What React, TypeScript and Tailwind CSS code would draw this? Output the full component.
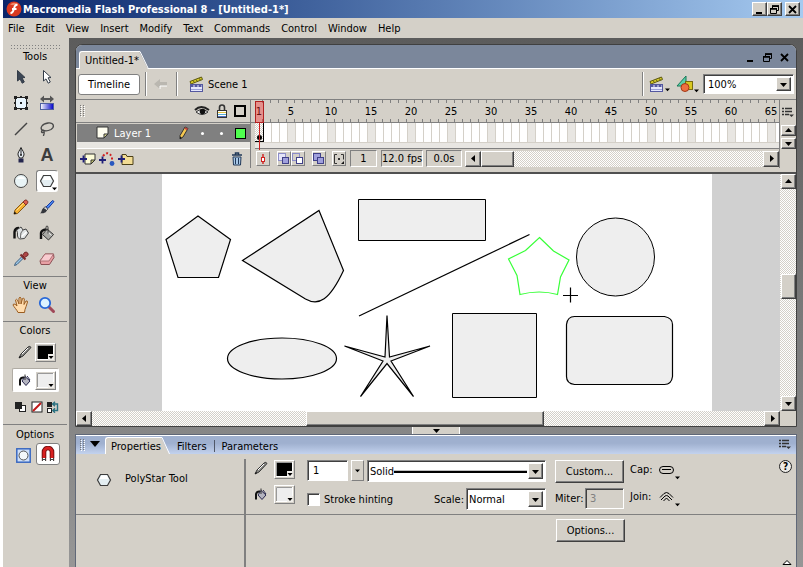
import React, { useState } from "react";

type Kids = { children?: React.ReactNode };

const TRACK =
  "bg-[repeating-conic-gradient(#ffffff_0_25%,#d4d0c8_0_50%)] [background-size:2px_2px]";
const RAISED =
  "border border-t-white border-l-white border-r-[#404040] border-b-[#404040] bg-[#d4d0c8] shadow-[inset_-1px_-1px_0_#808080]";
const SUNKEN =
  "border border-t-[#808080] border-l-[#808080] border-r-white border-b-white";
const WELL =
  "border border-t-[#808080] border-l-[#808080] border-r-white border-b-white shadow-[inset_1px_1px_0_#404040] bg-white";

function Ico({ s = 16, children }: Kids & { s?: number }) {
  return (
    <svg width={s} height={s} viewBox={`0 0 ${s} ${s}`} className="block shrink-0" aria-hidden="true">
      {children}
    </svg>
  );
}

function Tri({ dir, small = false }: { dir: "up" | "down" | "left" | "right"; small?: boolean }) {
  const d = {
    down: "M0 2h7L3.500 6z",
    up: "M0 5h7L3.500 1z",
    left: "M5 0v7L1 3.500z",
    right: "M2 0v7L6 3.500z",
  }[dir];
  return (
    <svg width={small ? 5 : 7} height={small ? 5 : 7} viewBox="0 0 7 7" className="block shrink-0" aria-hidden="true">
      <path d={d} fill="#000" />
    </svg>
  );
}

/* ---------- tool icons ---------- */

const ArrowIcon = ({ fill }: { fill: string }) => (
  <Ico>
    <path d="M4.500 1.500l7.500 7-3 .3 2.300 4.200-2.100 1.200-2.200-4.300L4.500 12z" fill={fill} stroke="#333c48" strokeWidth="1" />
  </Ico>
);
const TransformIcon = () => (
  <Ico>
    <rect x="2.5" y="2.500" width="11" height="11" fill="#e8f4fc" stroke="#222" />
    <path d="M1 1h3v3H1zM12 1h3v3h-3zM1 12h3v3H1zM12 12h3v3h-3zM7 1h2v2H7zM7 13h2v2H7zM1 7h2v2H1zM13 7h2v2h-2zM7 7h2v2H7z" fill="#222" />
  </Ico>
);
const GradientIcon = () => (
  <Ico>
    <defs>
      <linearGradient id="gt">
        <stop offset="0" stopColor="#fff" />
        <stop offset="1" stopColor="#0000c8" />
      </linearGradient>
    </defs>
    <path d="M1 4L5 .5V3h6V.5L15 4l-4 3.500V5H5v2.500z" fill="#555" />
    <rect x="1.500" y="8.500" width="13" height="6" fill="url(#gt)" stroke="#5060a0" />
  </Ico>
);
const LineIcon = () => (
  <Ico>
    <path d="M2 14L14 2" stroke="#444" strokeWidth="1.400" />
  </Ico>
);
const LassoIcon = () => (
  <Ico>
    <path d="M4 10C0 7 3 3 9 2c6-.6 7 4 3 6.500-3 1.500-6 1.800-8 .5-2 .5-2 3 0 2.500 2-.6 1-2.500-.5-2M5 11c1 1-.5 2-.500 4" fill="none" stroke="#4a4a4a" strokeWidth="1.300" />
  </Ico>
);
const PenIcon = () => (
  <Ico>
    <path d="M8 .5C7 3 4.500 5.500 5 8l1.500 3h3L11 8c.5-2.500-2-5-3-7.500z" fill="#e8eef6" stroke="#222" />
    <path d="M8 2v6" stroke="#222" />
    <circle cx="8" cy="8" r="1" fill="#222" />
    <path d="M5.500 11.500h5v4h-5z" fill="#24264e" />
  </Ico>
);
const OvalIcon = () => (
  <Ico>
    <circle cx="8" cy="8" r="6.500" fill="#e9f4f6" stroke="#444" />
    <path d="M4 6c2-3.500 6-3.500 8 0z" fill="#fff" />
  </Ico>
);
const PolyIcon = () => (
  <Ico>
    <path d="M4.500 2.500h7l3 5.500-3 5.500h-7L1.500 8z" fill="#e4eef2" stroke="#3c3c3c" strokeWidth="1.200" />
    <path d="M5.500 3.500h5.500L12.500 7h-9z" fill="#fff" />
  </Ico>
);
const PencilIcon = () => (
  <Ico>
    <path d="M2 11L10 3l3 3-8.500 8.500L1 15z" fill="#f5b030" stroke="#8a5a18" />
    <path d="M3.500 11.500L11 4" stroke="#ffe08a" />
    <path d="M10 3L12 1.200q1-.7 2.200.5t.5 2.200L13 6z" fill="#e06050" stroke="#803028" />
    <path d="M.8 15.200l.8-2.700 1.900 1.900z" fill="#111" />
  </Ico>
);
const BrushIcon = () => (
  <Ico>
    <path d="M7 8L13.500 1.500l1.500 1L9 9.500z" fill="#4a88f0" stroke="#1838a0" />
    <path d="M6 7.500L9 10l-1.500 1.500-3-2z" fill="#cfd4dc" stroke="#444" strokeWidth=".8" />
    <path d="M4.500 9L8 11.500C6 15 3 14 1 14.500 3 13 2.500 10 4.500 9z" fill="#34363c" />
  </Ico>
);
const InkIcon = () => (
  <Ico>
    <path d="M1.500 13.500V7Q2 3 6 3" fill="none" stroke="#111" strokeWidth="2.400" />
    <path d="M4.500 11q.5-4-1-6L8 2l2 3 3-1 2.500 4-4 5.500-5 .5q-1.500-1-2-3z" fill="#dfe3e4" stroke="#444" />
    <path d="M10 5Q7 7 7.500 13" fill="none" stroke="#666" />
    <path d="M8.500 11.500L13.500 7" fill="none" stroke="#fff" strokeWidth="1.500" />
  </Ico>
);
const BucketIcon = () => (
  <Ico>
    <path d="M2 14V8Q2.500 5 7 4.500" fill="none" stroke="#111" strokeWidth="2.400" />
    <path d="M8 4l6.500 5.500-5 5.500L3.500 9.500z" fill="#a8a8a4" stroke="#333" />
    <path d="M7.500 6l5 4.500" stroke="#eee" />
    <path d="M9 8.500V2.500Q9 1 8 1T7 2.500V6" fill="none" stroke="#333" />
  </Ico>
);
const DropperIcon = () => (
  <Ico>
    <path d="M9 5.500L2.500 12l-1 2.500L4 13.500 10.500 7z" fill="#9cc8e8" stroke="#406080" />
    <path d="M7.500 3.500l5 5" stroke="#803030" strokeWidth="2.200" />
    <path d="M9.500 4.500l2-3q1.800-1 3 .3t.3 2.700L11.500 6.500z" fill="#b04848" stroke="#702828" />
  </Ico>
);
const EraserIcon = () => (
  <Ico>
    <path d="M6 3h8.500l.5 3.500-4.500 7H2L1 10z" fill="#e8a0a4" stroke="#8c5054" />
    <path d="M6 3h8.500L10 10H1z" fill="#f8ccd0" stroke="#a06468" strokeWidth=".8" />
  </Ico>
);
const HandIcon = () => (
  <Ico s={18}>
    <path d="M6 16.500C5 14 2 11 1 9q.2-1.500 2-.8L5 10 3.500 4q1-1.400 2 0L7 8V2q1-1.500 2 0v6l1.500-5.500q1.300-1 1.800.5L12 8.500l2-3.500q1.500-.6 1.500 1-1.500 5-2.500 7.500l-.5 3z" fill="#ffdcae" stroke="#9a5c20" />
  </Ico>
);
const MagnifyIcon = () => (
  <Ico s={18}>
    <path d="M11 11l4.500 4.500" stroke="#a04858" strokeWidth="3" strokeLinecap="round" />
    <circle cx="7" cy="7" r="5.200" fill="#dcf2ff" stroke="#2868d8" strokeWidth="1.800" />
  </Ico>
);
const StrokePen = () => (
  <Ico s={14}>
    <path d="M1 13l2-4L10 2q2-1.500 3 .5L5 11z" fill="#8c8c88" stroke="#333" />
    <path d="M4 9l6-6" stroke="#fff" />
    <path d="M1 13l1-2 1 1z" fill="#000" />
  </Ico>
);
const SmallBucket = () => (
  <Ico s={14}>
    <path d="M2 12.500V7Q3 4 6 4.500" fill="none" stroke="#111" strokeWidth="2" />
    <path d="M7 3.500L12 8l-4 4.500L4 8z" fill="#b4b4c0" stroke="#26264c" />
    <path d="M7 7V1.500" stroke="#333" />
    <path d="M9 3l3 4" stroke="#26264c" />
  </Ico>
);

const Clapper = () => (
  <Ico>
    <path d="M1 5.500L12.500 1l1 2.500L2 8z" fill="#d8cc28" stroke="#5c5810" />
    <path d="M4 4.500l1.500 2M7 3.500l1.500 2M10 2.200l1.500 2" stroke="#5c5810" />
    <rect x="1.500" y="8.500" width="12" height="7" fill="#e4e6fc" stroke="#5458a0" />
    <path d="M1.500 10h12" stroke="#5458a0" strokeWidth="2" strokeDasharray="3 1" />
    <path d="M2 13.500h11" stroke="#9ca0d8" />
  </Ico>
);
const SymbolsIcon = () => (
  <Ico s={18}>
    <path d="M1 11L10 1v10z" fill="#5cd0a8" stroke="#187858" />
    <rect x="9.500" y="6.500" width="7" height="8" fill="#d8c820" stroke="#786c10" />
    <circle cx="9" cy="12.500" r="4" fill="#f07040" stroke="#a03818" />
  </Ico>
);
const RestoreIcon = () => (
  <Ico s={9}>
    <path d="M2.500 3.500V1.500h6v4H6.500M2 1h7M.5 8.500v-5h6v5zM0 3.500h7" fill="none" stroke="#000" />
    <path d="M2 1h7M0 4h7" stroke="#000" strokeWidth="1.500" />
  </Ico>
);
const CrossIcon = () => (
  <Ico s={9}>
    <path d="M1 1l7 7M8 1L1 8" stroke="#000" strokeWidth="1.800" />
  </Ico>
);
const MinIcon = () => (
  <Ico s={9}>
    <path d="M1 8h6" stroke="#000" strokeWidth="2" />
  </Ico>
);
const MenuIcon = () => (
  <Ico s={12}>
    <path d="M0 1.500h2M3 1.500h7M0 4.500h2M3 4.500h7M0 7.500h2M3 7.500h4" stroke="#333" strokeWidth="1.300" />
    <path d="M7 7.500h5L9.500 10z" fill="#333" />
  </Ico>
);

const FONT = "font-['DejaVu_Sans_Condensed','DejaVu_Sans',Tahoma,sans-serif]";

function WinBtn({ label, children }: Kids & { label: string }) {
  return (
    <button aria-label={label} className={`flex h-[14px] w-[15px] items-center justify-center ${RAISED}`}>
      {children}
    </button>
  );
}

function ScrollBtn({ dir, className }: { dir: "up" | "down" | "left" | "right"; className: string }) {
  return (
    <button aria-label={`Scroll ${dir}`} className={`flex shrink-0 items-center justify-center ${RAISED} ${className}`}>
      <Tri dir={dir} />
    </button>
  );
}

function Swatch({ label, color }: { label: string; color: string }) {
  return (
    <button aria-label={label} className="flex h-[19px] w-[21px] items-center justify-center border border-t-white border-l-white border-r-[#808080] border-b-[#808080] bg-[#d4d0c8]">
      <svg width="17" height="15" viewBox="0 0 17 15" aria-hidden="true">
        <rect x=".5" y=".5" width="16" height="14" fill={color} stroke="#fff" />
        <path d="M.5 14V.5H16" fill="none" stroke="#999" />
        <path d="M11 9h6v6h-6z" fill="#f0eeea" />
        <path d="M11.500 11h5L14 14z" fill="#000" />
      </svg>
    </button>
  );
}

function Grip() {
  return (
    <svg width="6" height="12" aria-hidden="true" className="block shrink-0">
      {[0, 2, 4, 6, 8, 10].map((y) => (
        <g key={y}>
          <path d={`M0 ${y}h1v1H0zM3 ${y}h1v1H3z`} fill="#777" />
          <path d={`M1 ${y + 1}h1v1H1zM4 ${y + 1}h1v1H4z`} fill="#fff" />
        </g>
      ))}
    </svg>
  );
}

const tools: [string, React.ReactNode][] = [
  ["Selection", <ArrowIcon fill="#3c4654" />],
  ["Subselection", <ArrowIcon fill="#fff" />],
  ["Free transform", <TransformIcon />],
  ["Gradient transform", <GradientIcon />],
  ["Line", <LineIcon />],
  ["Lasso", <LassoIcon />],
  ["Pen", <PenIcon />],
  ["Text", <span className="font-['Liberation_Sans',sans-serif] text-[18px] leading-[18px] font-bold text-[#3c3c3c]">A</span>],
  ["Oval", <OvalIcon />],
  ["PolyStar", <PolyIcon />],
  ["Pencil", <PencilIcon />],
  ["Brush", <BrushIcon />],
  ["Ink bottle", <InkIcon />],
  ["Paint bucket", <BucketIcon />],
  ["Eyedropper", <DropperIcon />],
  ["Eraser", <EraserIcon />],
];

function Heading({ children }: Kids) {
  return <h2 className="text-center">{children}</h2>;
}

function ToolPanel() {
  return (
    <aside className="flex w-[66px] shrink-0 flex-col bg-[#d4d0c8]">
      <div className="mx-[7px] mt-[6px] h-[5px] bg-[radial-gradient(#808080_1px,transparent_1px)] [background-size:3px_3px]" />
      <div className="pr-[2px] pt-px pb-px">
        <Heading>Tools</Heading>
      </div>
      <div className="grid grid-cols-2 pr-[9px] pl-[5px]">
        {tools.map(([name, icon]) => (
          <button
            key={name}
            aria-label={name}
            className={
              name === "PolyStar"
                ? "mx-[2px] my-[2px] flex h-[22px] items-center rounded-[3px] border border-[#808080] border-r-white border-b-white bg-white pl-[2px]"
                : "flex h-[26px] items-center justify-center"
            }
          >
            {icon}
            {name === "PolyStar" && (
              <span className="-ml-[3px] mt-[14px]">
                <Tri dir="down" small />
              </span>
            )}
          </button>
        ))}
      </div>
      <div className="mr-[2px] mt-[4px] border-t border-[#808080] pt-[2px]">
        <Heading>View</Heading>
      </div>
      <div className="grid grid-cols-2 pr-[9px] pl-[5px]">
        <button aria-label="Hand" className="flex h-[26px] items-center justify-center"><HandIcon /></button>
        <button aria-label="Zoom" className="flex h-[26px] items-center justify-center"><MagnifyIcon /></button>
      </div>
      <div className="mr-[2px] mt-[3px] border-t border-[#808080] pt-[2px]">
        <Heading>Colors</Heading>
      </div>
      <div className="mt-[3px] ml-[9px] flex h-[24px] w-[47px] items-center gap-[3px] pl-[6px]">
        <StrokePen />
        <Swatch label="Stroke color" color="#000" />
      </div>
      <div className="mt-[4px] ml-[9px] flex h-[24px] w-[47px] items-center gap-[3px] rounded-[2px] border border-[#b0aca4] border-r-white border-b-white bg-white pl-[5px]">
        <SmallBucket />
        <Swatch label="Fill color" color="#eee" />
      </div>
      <div className="mt-[9px] ml-[12px] flex items-center gap-[4px]">
        <button aria-label="Black and white">
          <Ico s={12}>
            <rect x="4.500" y="4.500" width="6" height="6" fill="#fff" stroke="#222" />
            <rect x="0" y="1" width="7" height="7" fill="#222" />
          </Ico>
        </button>
        <button aria-label="No color">
          <Ico s={12}>
            <rect x="1" y="1" width="10" height="10" fill="#fff" stroke="#222" />
            <path d="M2 10L10 2" stroke="#c01818" strokeWidth="2" />
          </Ico>
        </button>
        <button aria-label="Swap colors">
          <Ico s={12}>
            <rect x="0" y="1" width="5" height="5" fill="#222" />
            <rect x=".5" y="7.500" width="4" height="4" fill="#fff" stroke="#222" />
            <path d="M5 3h5.500v6.500H6M8 .8L5.800 3 8 5.200M8 7.300L5.800 9.500 8 11.700" fill="none" stroke="#287080" strokeWidth="1.400" />
          </Ico>
        </button>
      </div>
      <div className="mr-[2px] mt-[11px] border-t border-[#808080] pt-[3px]">
        <Heading>Options</Heading>
      </div>
      <div className="mt-[2px] grid grid-cols-2 pr-[7px] pl-[7px]">
        <button aria-label="Object drawing" className="flex h-[24px] items-center justify-center">
          <Ico s={15}>
            <rect x=".8" y=".8" width="13.400" height="13.400" fill="#cfe0fa" stroke="#3a68c0" strokeWidth="1.500" />
            <circle cx="7.500" cy="7.500" r="4.500" fill="#f4f8fa" stroke="#555" />
          </Ico>
        </button>
        <button aria-label="Snap to objects" className="flex h-[22px] w-[24px] items-center justify-center rounded-[3px] border border-[#808080] bg-white">
          <Ico>
            <path d="M4 15V6a4 4 0 018 0v9" fill="none" stroke="#701010" strokeWidth="4.600" />
            <path d="M4 12V6a4 4 0 018 0v6" fill="none" stroke="#d82020" strokeWidth="2.800" />
            <path d="M1.500 12h5v4h-5zM9.500 12h5v4h-5z" fill="#fff" />
            <path d="M2 12h1v3H2zM5 12h1v3H5zM3 13h2v1H3zM10 12h1v3h-1zM13 12h1v3h-1zM11 13h2v1h-2z" fill="#444" />
          </Ico>
        </button>
      </div>
    </aside>
  );
}

const Sep = () => <span className="h-[24px] w-[2px] border-l border-r border-l-[#808080] border-r-white" />;

function DocBar() {
  return (
    <>
      <div className="flex h-[24px] items-end border-b border-white bg-[#7b879b] pl-[3px]">
        <button role="tab" aria-selected="true" className="-mb-px h-[18px] rounded-tl-[3px] border-t border-l border-white bg-[#d4d0c8] pl-[5px]">
          Untitled-1*
        </button>
        <svg width="10" height="18" className="-mb-px block" aria-hidden="true">
          <path d="M0 0L9 18H0z" fill="#d4d0c8" />
          <path d="M0 .5H1L9.500 18" fill="none" stroke="#fff" />
        </svg>
        <div className="mb-[6px] ml-auto flex gap-[8px] pr-[7px]">
          <button aria-label="Minimize document"><MinIcon /></button>
          <button aria-label="Restore document"><RestoreIcon /></button>
          <button aria-label="Close document"><CrossIcon /></button>
        </div>
      </div>
      <div className="flex h-[30px] items-center bg-[#d4d0c8] pl-[2px] pr-[2px]">
        <button className="mr-[5px] h-[21px] w-[62px] rounded-[3px] border border-[#808080] bg-white text-center">Timeline</button>
        <Sep />
        <button aria-label="Back" className="mr-[7px] ml-[6px]" disabled>
          <Ico>
            <path d="M1 8l6-5v3h7v4H7v3z" fill="#bab7b0" />
            <path d="M7 13v-3h7" stroke="#fff" fill="none" />
          </Ico>
        </button>
        <Sep />
        <span className="ml-[11px] flex items-center gap-[3px]">
          <Clapper />
          Scene 1
        </span>
        <span className="ml-auto" />
        <Sep />
        <button aria-label="Edit scene" className="ml-[5px] flex items-end">
          <Clapper />
          <Tri dir="down" small />
        </button>
        <button aria-label="Edit symbols" className="mr-[4px] ml-[6px] flex items-end">
          <SymbolsIcon />
          <Tri dir="down" small />
        </button>
        <span className={`flex h-[20px] w-[91px] items-stretch p-[2px] ${WELL}`}>
          <select aria-label="Zoom level" className="min-w-0 flex-1 appearance-none bg-transparent pl-[2px] outline-none">
            <option>100%</option>
          </select>
          <span className={`pointer-events-none flex w-[15px] items-center justify-center ${RAISED}`}>
            <Tri dir="down" />
          </span>
        </span>
      </div>
    </>
  );
}

const frames = Array.from({ length: 66 }, (_, i) => i + 1);

function FrameBtn({ label, children }: Kids & { label: string }) {
  return (
    <button aria-label={label} className="flex h-[15px] w-[14px] items-center justify-center border border-t-white border-l-white border-r-[#808080] border-b-[#808080]">
      {children}
    </button>
  );
}

function Timeline() {
  return (
    <section aria-label="Timeline" className="flex border-t border-[#808080] bg-[#d4d0c8] pb-[4px]">
      <div className="flex w-[174px] shrink-0 flex-col">
        <div className="flex h-[23px] items-center border-b border-[#808080] pl-[4px] pr-[4px]">
          <Grip />
          <span className="ml-auto flex items-center gap-[6px]">
            <svg width="16" height="12" viewBox="0 0 16 12" aria-label="Show">
              <path d="M1 5Q7-1 15 5" fill="none" stroke="#222" strokeWidth="2" />
              <path d="M2 7q6-5 12 0-6 5-12 0z" fill="#eee" stroke="#333" />
              <circle cx="8.500" cy="6.500" r="2.800" fill="#111" />
            </svg>
            <svg width="12" height="14" viewBox="0 0 12 14" aria-label="Lock">
              <path d="M3.500 7V3.500q0-2.500 2.500-2.500t2.500 2.500V7" fill="none" stroke="#333" strokeWidth="1.600" />
              <rect x="1.500" y="6.500" width="9" height="7" fill="#fff" stroke="#333" />
              <path d="M2 8.500h8" stroke="#e0c040" />
              <path d="M2 10.500h8" stroke="#58b0d8" />
              <path d="M2 12.500h8" stroke="#5070c0" />
            </svg>
            <Ico s={12}>
              <rect x="1" y="1" width="10" height="10" fill="none" stroke="#000" strokeWidth="2" />
            </Ico>
          </span>
        </div>
        <div className="mt-[1px] ml-px flex h-[18px] items-center bg-[#808080] pl-[19px] pr-[4px] text-white">
          <Ico s={14}>
            <path d="M1 1h11v7l-4 4H1z" fill="#fffef0" stroke="#333" />
            <path d="M12 8H8v4z" fill="#d8d890" stroke="#333" />
          </Ico>
          <span className="ml-[4px]">Layer 1</span>
          <span className="ml-auto flex items-center">
            <svg width="10" height="14" viewBox="0 0 10 14" aria-hidden="true">
              <path d="M1 13V9.500L6 1l3 1.500-5 8.500z" fill="#f5c850" stroke="#333" />
              <path d="M5.800 2l2.700 1.500" stroke="#c04040" strokeWidth="2" />
              <path d="M1 13v-2.500L3 12z" fill="#111" />
            </svg>
            <span className="ml-[12px] h-[3px] w-[3px] rounded-full bg-white" />
            <span className="ml-[16px] h-[3px] w-[3px] rounded-full bg-white" />
            <span className="ml-[12px] h-[11px] w-[11px] border border-black bg-[#4fff4f]" />
          </span>
        </div>
        <div className="ml-px h-[7px] border-b border-white bg-[#e8e6e2]" />
        <div className="flex h-[19px] items-center gap-[3px] pl-[4px] pr-[6px]">
          <button aria-label="Insert layer">
            <Ico>
              <path d="M5 3h10v6l-4 4H5z" fill="#fdfcd8" stroke="#333" />
              <path d="M15 9h-4v4z" fill="#c8c870" stroke="#333" />
              <path d="M0 8h7M3.500 4.500v7" stroke="#202078" strokeWidth="1.800" />
            </Ico>
          </button>
          <button aria-label="Add motion guide">
            <Ico>
              <path d="M4 5Q9-1 13 6v5" fill="none" stroke="#d02020" strokeWidth="2" strokeDasharray="2 2" />
              <circle cx="13" cy="12.500" r="2.400" fill="#2858c0" />
              <path d="M0 9h7M3.500 5.500v7" stroke="#202078" strokeWidth="1.800" />
            </Ico>
          </button>
          <button aria-label="Insert folder">
            <Ico>
              <path d="M4 13.500V3.500h4l1 2h6v8z" fill="#f2dc94" stroke="#4c4018" />
              <path d="M0 8h7M3.500 4.500v7" stroke="#202078" strokeWidth="1.800" />
            </Ico>
          </button>
          <button aria-label="Delete layer" className="ml-auto">
            <Ico s={14}>
              <path d="M2 3h10M5.500 2.500V1h3v1.500" stroke="#203858" strokeWidth="1.500" fill="none" />
              <path d="M3 5h8l-.5 8h-7z" fill="#a8c8e8" stroke="#203858" />
              <path d="M5.500 6v6M8.500 6v6" stroke="#203858" />
            </Ico>
          </button>
        </div>
      </div>

      <div className="relative flex min-w-0 flex-1 flex-col border-l border-[#808080]">
        <div className="flex h-[23px] overflow-hidden border-b border-[#808080] pl-[4px]">
          {frames.map((n) => (
            <span key={n} className="flex h-[22px] w-[8px] shrink-0 flex-col justify-between">
              <span className="ml-[7px] h-[3px] w-px bg-[#808080]" />
              <span className="flex h-[13px] w-[8px] justify-center whitespace-nowrap">{n === 1 || n % 5 === 0 ? n : ""}</span>
              <span className="ml-[7px] h-[3px] w-px bg-[#808080]" />
            </span>
          ))}
        </div>
        <div className="flex h-[20px] overflow-hidden border-b border-[#d4d0c8] pl-[4px]">
          {frames.map((n) => (
            <span
              key={n}
              className={
                n === 1
                  ? `flex w-[9px] shrink-0 items-end justify-center border-r border-b border-black pb-[1px] ${TRACK}`
                  : n % 5 === 0
                    ? "w-[8px] shrink-0 border-r border-[#d4d0c8] bg-[#e8e6e2]"
                    : "w-[8px] shrink-0 border-r border-[#d4d0c8] bg-white"
              }
            >
              {n === 1 && <span className="h-[5px] w-[5px] shrink-0 rounded-full bg-black" />}
            </span>
          ))}
        </div>
        <div className="ml-[4px] h-[6px] border-b border-[#808080] bg-[#e8e6e2]" />
        <div className="flex h-[19px] items-center pl-[5px]">
          <FrameBtn label="Center frame">
            <Ico s={10}><path d="M5 0v10" stroke="#d02020" strokeWidth="1.400" /><rect x="3.500" y="3.500" width="3" height="4" fill="#fff" stroke="#d02020" /></Ico>
          </FrameBtn>
          <span className="ml-[7px] flex">
            <FrameBtn label="Onion skin">
              <Ico s={12}><rect x=".5" y=".5" width="7" height="7" fill="#e4e4f8" stroke="#8c8cc8" /><rect x="4.500" y="4.500" width="6" height="6" fill="#a0a0dc" stroke="#404088" /></Ico>
            </FrameBtn>
            <FrameBtn label="Onion skin outlines">
              <Ico s={12}><rect x=".5" y=".5" width="7" height="7" fill="none" stroke="#8c8cc8" /><rect x="4.500" y="4.500" width="6" height="6" fill="#fff" stroke="#404088" /></Ico>
            </FrameBtn>
          </span>
          <span className="ml-[7px] flex">
            <FrameBtn label="Edit multiple frames">
              <Ico s={12}><rect x=".5" y=".5" width="7" height="7" fill="#a0a0dc" stroke="#404088" /><rect x="4.500" y="4.500" width="6" height="6" fill="#a0a0dc" stroke="#404088" /></Ico>
            </FrameBtn>
          </span>
          <span className="ml-[6px] flex">
            <FrameBtn label="Modify onion markers">
              <Ico s={12}><path d="M4 1.500H1.500v9H4M8 1.500h2.500v5" fill="none" stroke="#333" /><path d="M5 6h2" stroke="#333" strokeWidth="2" /><path d="M11 8v3H8z" fill="#111" /></Ico>
            </FrameBtn>
          </span>
          <span className={`ml-[4px] h-[17px] w-[27px] text-center leading-[16px] ${SUNKEN}`}>1</span>
          <span className={`ml-[4px] h-[17px] w-[42px] text-center leading-[16px] whitespace-nowrap ${SUNKEN}`}>12.0 fps</span>
          <span className={`ml-[3px] h-[17px] w-[36px] text-center leading-[16px] ${SUNKEN}`}>0.0s</span>
          <div className={`ml-[3px] flex h-[16px] flex-1 ${TRACK}`}>
            <ScrollBtn dir="left" className="h-[16px] w-[16px]" />
            <span className={`h-[16px] w-[33px] ${RAISED}`} />
            <span className="ml-auto" />
            <ScrollBtn dir="right" className="h-[16px] w-[16px]" />
          </div>
        </div>
        <div className="pointer-events-none absolute top-[1px] left-[4px] flex w-[9px] flex-col items-center">
          <span className="h-[22px] w-full border border-[#b02020] bg-[#ff3030]/40" />
          <span className="h-[27px] w-px bg-[#d02020]" />
        </div>
      </div>

      <div className="flex w-[17px] shrink-0 flex-col items-center border-l border-[#808080]">
        <button aria-label="Frame view" className="flex h-[25px] items-center">
          <MenuIcon />
        </button>
        <ScrollBtn dir="up" className="h-[11px] w-[15px]" />
        <ScrollBtn dir="down" className="mt-[2px] h-[11px] w-[15px]" />
      </div>
    </section>
  );
}

function Stage() {
  return (
    <div className="flex h-[239px] border-t-2 border-[#505050] bg-[#d0d0d0]">
      <div className="mr-[68px] ml-[86px] min-w-0 flex-1 overflow-hidden bg-white">
        <svg width="550" height="237" viewBox="162 174 550 237" className="block" fill="#eee" stroke="#000" strokeWidth="1.200" aria-label="Stage drawing">
          <path d="M198 216l32.500 23.500-12 38h-40.500l-12-38z" />
          <path d="M319 210.500l24.500 60c-14 30-25 36-38 28.500L242.500 260.500z" />
          <path d="M358.500 199.500h127v41h-127zM452.500 313.500h84v84h-84z" strokeWidth="1" />
          <path d="M359 316L529.500 234.500" />
          <ellipse cx="282" cy="358.500" rx="54.500" ry="20.500" />
          <circle cx="615.500" cy="257" r="39" strokeWidth="1" />
          <path d="M387 315.500l2.500 41.500 40.500-11-39 15 22.500 35.500L387 363.500l-26.500 33 22.500-35.500-38.500-15 40.500 11z" />
          <path d="M574.500 316.500h90q8 1.500 8 8v52q-1 8-8 8h-90q-8-1-8-8v-52q1-8 8-8z" />
          <path d="M539.500 237.500l14 13.500 15.500 9-8.500 17-3 17.500q-18-5-37.500 0l-3-19-8.500-16.500 17-8.500z" fill="#fff" stroke="#38ff38" />
          <path d="M570.500 287.500v15M563 295.500h15" strokeWidth="1.200" />
        </svg>
      </div>
      <div className={`flex w-[16px] flex-col items-center ${TRACK}`}>
        <ScrollBtn dir="up" className="h-[15px] w-[15px]" />
        <span className={`mt-[85px] h-[25px] w-[15px] ${RAISED}`} />
        <span className="mt-auto" />
        <ScrollBtn dir="down" className="h-[15px] w-[15px]" />
      </div>
    </div>
  );
}

function Properties() {
  const [hint, setHint] = useState(false);
  return (
    <section aria-label="Properties" className="flex flex-1 flex-col border-t border-r border-l border-[#606878] bg-[#d4d0c8]">
      <div role="tablist" className="flex h-[19px] items-end border-t border-white bg-gradient-to-b from-[#9fb0cf] from-40% to-[#c3d2ee] pl-[4px]">
        <span className="mb-[3px]"><Grip /></span>
        <svg width="10" height="6" className="mb-[7px] ml-[4px] block" aria-hidden="true"><path d="M0 0h10L5 6z" /></svg>
        <button role="tab" aria-selected="true" className="ml-[5px] h-[17px] rounded-tl-[3px] border-t border-l border-white bg-[#d4d0c8] pl-[5px]">Properties</button>
        <svg width="9" height="17" className="block" aria-hidden="true">
          <path d="M0 0L8 17H0z" fill="#d4d0c8" />
          <path d="M0 .5H1L8.500 17" fill="none" stroke="#fff" />
        </svg>
        <button role="tab" aria-selected="false" className="mb-[1px] ml-[7px]">Filters</button>
        <span className="mb-[2px] ml-[7px] h-[12px] w-px bg-[#505868]" />
        <button role="tab" aria-selected="false" className="mb-[1px] ml-[7px]">Parameters</button>
        <button aria-label="Panel menu" className="mb-[3px] ml-auto pr-[5px]"><MenuIcon /></button>
      </div>
      <div className="flex flex-1">
        <div className="flex w-[168px] shrink-0 flex-col">
          <div className="flex h-[61px] items-start gap-[13px] border-b border-[#808080] pt-[18px] pl-[20px]">
            <PolyIcon />
            <span>PolyStar Tool</span>
          </div>
        </div>
        <div className="mt-[5px] w-[2px] bg-[#808080]" />
        <div className="flex min-w-0 flex-1 flex-col">
          <div className="flex h-[61px] border-b border-[#808080] pt-[6px] pl-[8px]">
            <div className="mt-px flex w-[20px] flex-col gap-[12px]">
              <StrokePen />
              <SmallBucket />
            </div>
            <div className="flex flex-col gap-[6px]">
              <Swatch label="Stroke color" color="#000" />
              <Swatch label="Fill color" color="#eee" />
            </div>
            <div className="ml-[12px] flex w-[239px] flex-col gap-[6px]">
              <div className="flex gap-[3px]">
                <input aria-label="Stroke height" defaultValue="1" className={`h-[21px] w-[41px] pl-[5px] outline-none ${WELL}`} />
                <button aria-label="Stroke height slider" className="flex h-[21px] w-[13px] items-center justify-center border border-t-white border-l-white border-r-[#808080] border-b-[#808080]">
                  <Tri dir="down" small />
                </button>
                <span className={`flex h-[22px] flex-1 items-stretch p-[2px] ${WELL}`}>
                  <select aria-label="Stroke style" className="w-[24px] appearance-none bg-transparent outline-none">
                    <option>Solid</option>
                  </select>
                  <span className="mr-[1px] h-[3px] flex-1 self-center border-t border-[#c0c0c0] bg-black" />
                  <span className={`pointer-events-none flex w-[15px] items-center justify-center ${RAISED}`}>
                    <Tri dir="down" />
                  </span>
                </span>
              </div>
              <div className="flex items-center">
                <input
                  id="hint"
                  type="checkbox"
                  checked={hint}
                  onChange={(e) => setHint(e.target.checked)}
                  className={`h-[13px] w-[13px] appearance-none checked:bg-[#404040] ${WELL}`}
                />
                <label htmlFor="hint" className="ml-[4px]">Stroke hinting</label>
                <label htmlFor="scale" className="mr-[2px] ml-auto">Scale:</label>
                <span className={`flex h-[22px] w-[80px] items-stretch p-[2px] ${WELL}`}>
                  <select id="scale" className="min-w-0 flex-1 appearance-none bg-transparent outline-none">
                    <option>Normal</option>
                  </select>
                  <span className={`pointer-events-none flex w-[15px] items-center justify-center ${RAISED}`}>
                    <Tri dir="down" />
                  </span>
                </span>
              </div>
            </div>
            <div className="ml-[9px] flex w-[69px] flex-col gap-[5px]">
              <button className={`h-[23px] ${RAISED}`}>Custom...</button>
              <span className="flex items-center justify-between">
                <label htmlFor="miter">Miter:</label>
                <input id="miter" disabled defaultValue="3" className="h-[21px] w-[39px] border border-t-[#808080] border-l-[#808080] border-r-white border-b-white pl-[4px] text-[#808080] shadow-[inset_1px_1px_0_#404040]" />
              </span>
            </div>
            <div className="ml-[6px] flex flex-col gap-[7px] pt-[3px]">
              <span className="flex h-[20px] items-start">
                <span className="w-[29px]">Cap:</span>
                <button aria-label="Cap style" className="flex">
                  <svg width="16" height="10" className="mt-[3px] block" aria-hidden="true">
                    <rect x=".5" y=".5" width="14" height="7" rx="3.500" fill="none" stroke="#000" />
                    <path d="M3 3.500h9" stroke="#000" />
                  </svg>
                  <span className="mt-[12px]"><Tri dir="down" small /></span>
                </button>
              </span>
              <span className="flex h-[20px] items-start">
                <span className="w-[29px]">Join:</span>
                <button aria-label="Join style" className="flex">
                  <svg width="16" height="12" className="mt-[1px] block" aria-hidden="true">
                    <path d="M1 6.500L5 2.500q2.500-2 5 0l4 4M2 9l4-4q1.500-1 3 0l4 4M4.500 10l3-3 3 3" fill="none" stroke="#000" />
                  </svg>
                  <span className="mt-[12px]"><Tri dir="down" small /></span>
                </button>
              </span>
            </div>
            <button aria-label="Help" className="mr-[4px] ml-auto flex h-[13px] w-[13px] items-center justify-center rounded-full border border-[#222] bg-[#eceae6] text-[10px] leading-[10px] font-bold">
              ?
            </button>
          </div>
          <div className="flex flex-1 items-start pt-[4px] pl-[310px]">
            <button className={`h-[23px] w-[69px] ${RAISED}`}>Options...</button>
            <button aria-label="Collapse" className="mr-[4px] mb-[2px] ml-auto self-end">
              <svg width="10" height="6" className="block" aria-hidden="true"><path d="M1 5.500L5 1.500l4 4z" fill="#fff" stroke="#000" /></svg>
            </button>
          </div>
        </div>
      </div>
    </section>
  );
}

export default function App() {
  return (
    <div className={`flex min-h-screen flex-col border-l-[3px] border-white bg-[#d4d0c8] text-[11px] leading-[13px] text-black ${FONT}`}>
      <header className="flex h-[18px] items-center bg-gradient-to-r from-[#0a246a] to-[#a6caf0] pr-[3px] pl-[3px]">
        <Ico>
          <circle cx="8" cy="8" r="7.500" fill="#d83820" />
          <path d="M4 3.500Q8 0 12 3.500 8 5 4 3.500z" fill="#f08868" />
          <path d="M11.500 3.500Q8.500 4 8 7.500T4.500 12.500M6 8h4.500" fill="none" stroke="#fff" strokeWidth="1.800" />
        </Ico>
        <h1 className="ml-[1px] font-bold text-white">Macromedia Flash Professional 8 - [Untitled-1*]</h1>
        <div className="ml-auto flex">
          <WinBtn label="Minimize"><MinIcon /></WinBtn>
          <WinBtn label="Restore"><RestoreIcon /></WinBtn>
          <span className="w-[3px]" />
          <WinBtn label="Close"><CrossIcon /></WinBtn>
        </div>
      </header>
      <nav className="flex h-[20px] items-center gap-[11px] pl-[5px]">
        {["File", "Edit", "View", "Insert", "Modify", "Text", "Commands", "Control", "Window", "Help"].map((m) => (
          <button key={m}>{m}</button>
        ))}
      </nav>
      <div className="flex flex-1">
        <ToolPanel />
        <main className="flex min-w-0 flex-1 flex-col bg-gradient-to-b from-[#5c5c5c] to-[#969696] px-[6px] pt-[6px]">
          <div className="flex flex-col overflow-hidden rounded-t-[7px] border border-[#404040] bg-[#d4d0c8]">
            <DocBar />
            <Timeline />
            <Stage />
            <div className="flex h-[15px] bg-[#d4d0c8]">
              <div className={`flex flex-1 ${TRACK}`}>
                <ScrollBtn dir="left" className="h-[15px] w-[16px]" />
                <span className={`ml-[214px] h-[15px] w-[238px] ${RAISED}`} />
                <span className="ml-auto" />
                <ScrollBtn dir="right" className="h-[15px] w-[16px]" />
              </div>
              <span className="w-[16px]" />
            </div>
          </div>
          <button aria-label="Toggle panel" className="flex h-[7px] w-[48px] items-center justify-center self-center border-x border-white bg-[#d4d0c8]">
            <Tri dir="down" />
          </button>
          <Properties />
        </main>
      </div>
    </div>
  );
}
